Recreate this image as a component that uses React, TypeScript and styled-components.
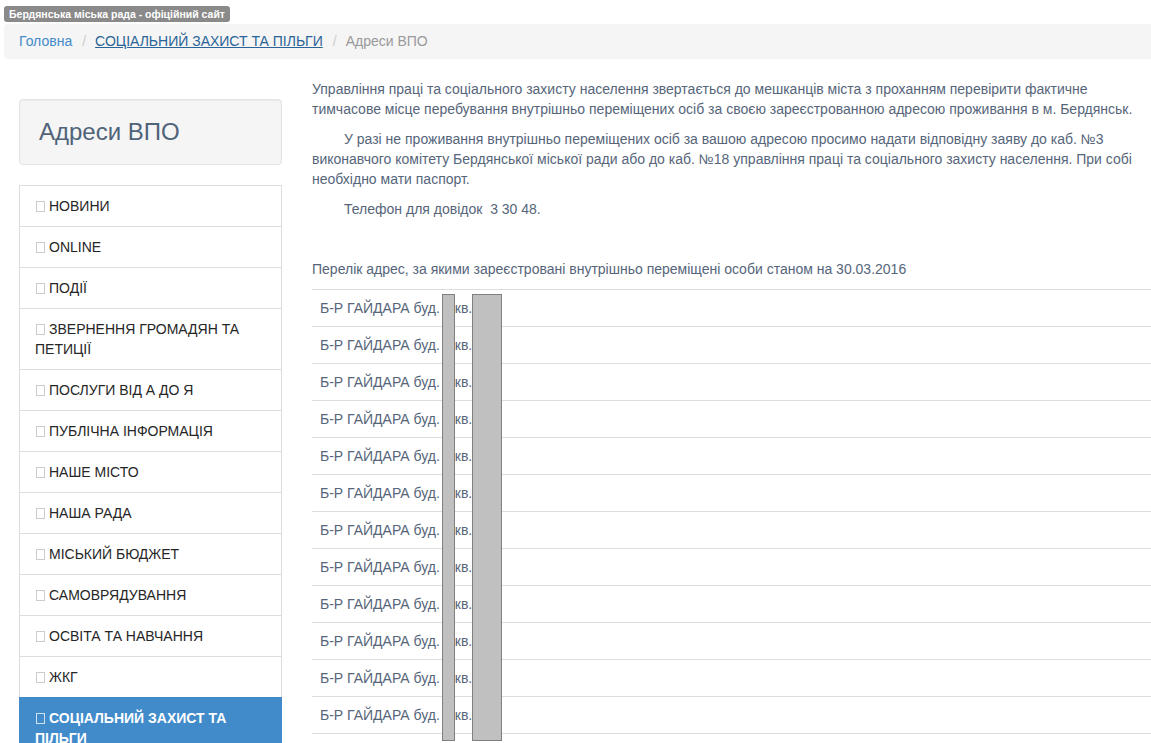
import { createGlobalStyle, styled } from 'styled-components'

const GlobalStyle = createGlobalStyle`
  html, body {
    margin: 0;
    padding: 0;
    background: #fff;
    overflow: hidden;
  }
  body {
    font-family: "Liberation Sans", Arial, Helvetica, sans-serif;
    font-size: 14px;
    line-height: 20px;
    color: #333;
  }
`

const Page = styled.div`
  width: 1170px;
  padding-left: 4px;
`

const SiteBadge = styled.div`
  display: inline-block;
  margin-top: 6px;
  margin-bottom: 2px;
  padding: 0 5px;
  height: 16px;
  line-height: 16px;
  background: #8a8a8a;
  color: #fff;
  font-size: 10.5px;
  font-weight: bold;
  border-radius: 3px;
`

const Breadcrumb = styled.ol`
  display: flex;
  list-style: none;
  margin: 0 0 20px;
  padding: 7px 15px 8px;
  background: #f5f5f5;
  border-radius: 4px;

  li + li::before {
    content: '/';
    padding: 0 9px 0 10px;
    color: #ccc;
  }
`

const Crumb = styled.li<{ $active?: boolean }>`
  color: ${(p) => (p.$active ? '#999' : '#428bca')};
`

const CrumbLink = styled.a<{ $underline?: boolean }>`
  color: ${(p) => (p.$underline ? '#2a6496' : '#428bca')};
  text-decoration: ${(p) => (p.$underline ? 'underline' : 'none')};
`

const Row = styled.div`
  display: flex;
  gap: 30px;
  padding: 0 15px;
`

const Sidebar = styled.aside`
  width: 263px;
  flex-shrink: 0;
  padding-top: 20px;
`

const Well = styled.div`
  background: #f5f5f5;
  border: 1px solid #e3e3e3;
  border-radius: 4px;
  padding: 19px;
  margin-bottom: 20px;
  box-shadow: inset 0 1px 1px rgba(0, 0, 0, 0.05);
`

const WellTitle = styled.h1`
  margin: 0;
  font-size: 24px;
  line-height: 26px;
  font-weight: normal;
  color: #4f6379;
`

const Menu = styled.ul`
  list-style: none;
  margin: 0;
  padding: 0;
`

const MenuItem = styled.li<{ $active?: boolean }>`
  padding: 10px 15px;
  margin-bottom: -1px;
  border: 1px solid ${(p) => (p.$active ? '#428bca' : '#ddd')};
  background: ${(p) => (p.$active ? '#428bca' : '#fff')};
  color: ${(p) => (p.$active ? '#fff' : '#262626')};
  font-weight: ${(p) => (p.$active ? 'bold' : 'normal')};
  position: relative;
`

const Glyph = styled.span<{ $active?: boolean }>`
  display: inline-block;
  width: 7px;
  height: 9px;
  margin: 0 4px 0 1px;
  border: 1px solid ${(p) => (p.$active ? '#cfe0f0' : '#ccc')};
  vertical-align: -1px;
`

const Content = styled.main`
  flex: 1;
  color: #56657a;
`

const Para = styled.p<{ $indent?: boolean }>`
  margin: 0 0 10px;
  text-indent: ${(p) => (p.$indent ? '32px' : '0')};
  min-height: 20px;
`

const TableWrap = styled.div`
  position: relative;
`

const Table = styled.table`
  width: 100%;
  border-collapse: collapse;
  border-bottom: 1px solid #ddd;
`

const Cell = styled.td`
  padding: 8px;
  border-top: 1px solid #ddd;
  line-height: 20px;
  white-space: nowrap;
`

const Hidden = styled.span`
  display: inline-block;
  width: 11px;
`

const Redaction = styled.div<{ $left: number; $width: number }>`
  position: absolute;
  top: 5px;
  left: ${(p) => p.$left}px;
  width: ${(p) => p.$width}px;
  height: 445px;
  background: #c0c0c0;
  border: 1px solid #808080;
`

const menu = [
  'НОВИНИ',
  'ONLINE',
  'ПОДІЇ',
  'ЗВЕРНЕННЯ ГРОМАДЯН ТА ПЕТИЦІЇ',
  'ПОСЛУГИ ВІД А ДО Я',
  'ПУБЛІЧНА ІНФОРМАЦІЯ',
  'НАШЕ МІСТО',
  'НАША РАДА',
  'МІСЬКИЙ БЮДЖЕТ',
  'САМОВРЯДУВАННЯ',
  'ОСВІТА ТА НАВЧАННЯ',
  'ЖКГ',
  'СОЦІАЛЬНИЙ ЗАХИСТ ТА ПІЛЬГИ',
]

const rows = Array.from({ length: 12 }, (_, i) => i)

const App = () => {
  return (
    <Page>
      <GlobalStyle />
      <SiteBadge>Бердянська міська рада - офіційний сайт</SiteBadge>
      <Breadcrumb>
        <Crumb>
          <CrumbLink href="#">Головна</CrumbLink>
        </Crumb>
        <Crumb>
          <CrumbLink href="#" $underline>
            СОЦІАЛЬНИЙ ЗАХИСТ ТА ПІЛЬГИ
          </CrumbLink>
        </Crumb>
        <Crumb $active>Адреси ВПО</Crumb>
      </Breadcrumb>
      <Row>
        <Sidebar>
          <Well>
            <WellTitle>Адреси ВПО</WellTitle>
          </Well>
          <Menu>
            {menu.map((item) => {
              const active = item === 'СОЦІАЛЬНИЙ ЗАХИСТ ТА ПІЛЬГИ'
              return (
                <MenuItem key={item} $active={active}>
                  <Glyph $active={active} />
                  {item}
                </MenuItem>
              )
            })}
          </Menu>
        </Sidebar>
        <Content>
          <Para>
            Управління праці та соціального захисту населення звертається до мешканців міста з
            проханням перевірити фактичне тимчасове місце перебування внутрішньо переміщених осіб за
            своєю зареєстрованною адресою проживання в м. Бердянськ.
          </Para>
          <Para $indent>
            У разі не проживання внутрішньо переміщених осіб за вашою адресою просимо надати
            відповідну заяву до каб. №3 виконавчого комітету Бердянської міської ради або до каб.
            №18 управління праці та соціального захисту населення. При собі необхідно мати паспорт.
          </Para>
          <Para $indent>Телефон для довідок&nbsp; 3 30 48.</Para>
          <Para />
          <Para>
            Перелік адрес, за якими зареєстровані внутрішньо переміщені особи станом на 30.03.2016
          </Para>
          <TableWrap>
            <Table>
              <tbody>
                {rows.map((r) => (
                  <tr key={r}>
                    <Cell>
                      Б-Р ГАЙДАРА буд. <Hidden />
                      кв.
                    </Cell>
                  </tr>
                ))}
              </tbody>
            </Table>
            <Redaction $left={130} $width={11} />
            <Redaction $left={160} $width={28} />
          </TableWrap>
        </Content>
      </Row>
    </Page>
  )
}

export default App
